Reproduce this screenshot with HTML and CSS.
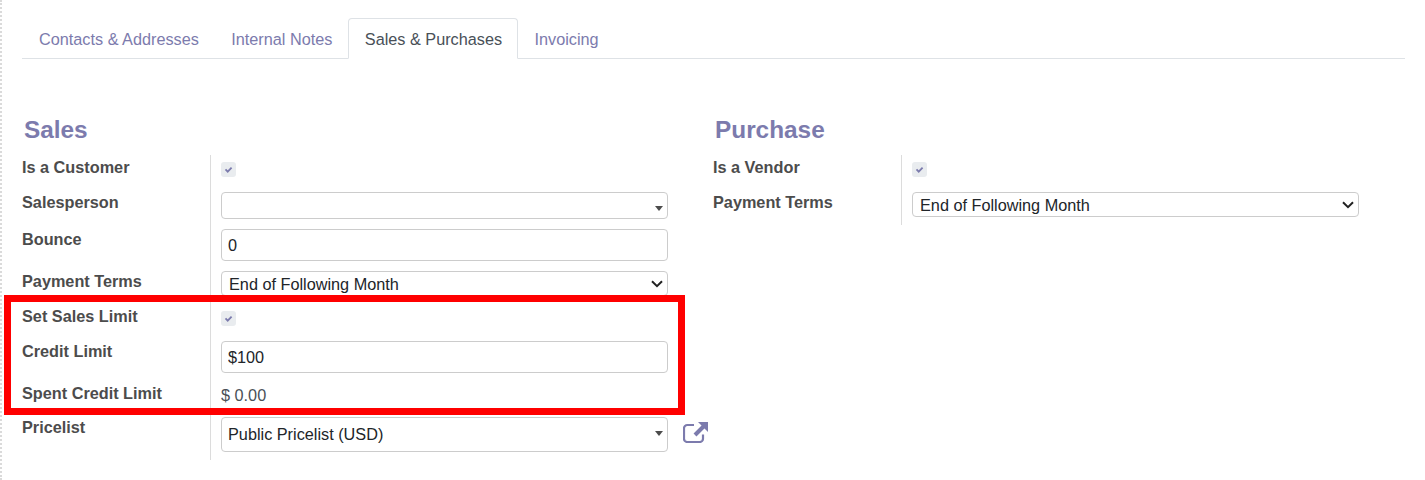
FILE: index.html
```html
<!DOCTYPE html>
<html lang="en">
<head>
<meta charset="utf-8">
<title>Sales &amp; Purchases</title>
<link rel="stylesheet" href="styles.css">
</head>
<body>
<div class="sheet">
  <ul class="tabs">
    <li class="tab">Contacts &amp; Addresses</li>
    <li class="tab">Internal Notes</li>
    <li class="tab active">Sales &amp; Purchases</li>
    <li class="tab">Invoicing</li>
  </ul>
  <div class="groups">
    <section class="group">
      <h2 class="group-title">Sales</h2>
      <div class="fields">
        <div class="row h37"><label class="label first">Is a Customer</label><div class="cell"><span class="check"><svg viewBox="0 0 15 15" width="15" height="15"><path class="tick" d="M4.5 7.4l2.200 2.200 3.900-4"/></svg></span></div></div>
        <div class="row h37"><label class="label">Salesperson</label><div class="cell"><div class="combo"><input class="input short" type="text"></div></div></div>
        <div class="row h42"><label class="label">Bounce</label><div class="cell"><input class="input" type="text" value="0"></div></div>
        <div class="row h35"><label class="label">Payment Terms</label><div class="cell"><select class="native"><option>End of Following Month</option></select></div></div>
        <div class="row h35"><label class="label">Set Sales Limit</label><div class="cell"><span class="check check-high"><svg viewBox="0 0 15 15" width="15" height="15"><path class="tick" d="M4.5 7.4l2.200 2.200 3.900-4"/></svg></span></div></div>
        <div class="row h42"><label class="label">Credit Limit</label><div class="cell"><input class="input" type="text" value="$100"></div></div>
        <div class="row h34"><label class="label">Spent Credit Limit</label><div class="cell"><span class="value">$ 0.00</span></div></div>
        <div class="row h43"><label class="label">Pricelist</label><div class="cell cell-link"><div class="combo"><select class="plain"><option>Public Pricelist (USD)</option></select></div>
          <svg class="ext" viewBox="0 0 25 21" width="25" height="21"><path d="M20 12.500v4.200a3.300 3.300 0 0 1-3.300 3.300H4.300A3.300 3.300 0 0 1 1 16.700V6.300A3.300 3.300 0 0 1 4.300 3H11" fill="none" stroke="#7c7bad" stroke-width="2.200"/><path d="M15 0h10v10z" fill="#7c7bad"/><path d="M20.500 4.500l-8.500 8.500" fill="none" stroke="#7c7bad" stroke-width="4"/></svg>
        </div></div>
      </div>
    </section>
    <section class="group">
      <h2 class="group-title">Purchase</h2>
      <div class="fields">
        <div class="row h37"><label class="label first">Is a Vendor</label><div class="cell"><span class="check"><svg viewBox="0 0 15 15" width="15" height="15"><path class="tick" d="M4.5 7.4l2.200 2.200 3.900-4"/></svg></span></div></div>
        <div class="row h33"><label class="label">Payment Terms</label><div class="cell"><select class="native"><option>End of Following Month</option></select></div></div>
      </div>
    </section>
  </div>
  <div class="highlight"></div>
</div>
</body>
</html>
```
FILE: styles.css
```css
* { box-sizing: border-box; }
html, body { margin: 0; height: 100%; background: #fff; overflow: hidden; }
body { font-family: "Liberation Sans", Arial, sans-serif; font-size: 16.25px; color: #212529; }

.sheet {
  position: relative;
  height: 480px;
  padding: 18px 20px 0 20px;
  border-left: 2px dotted #dadada;
}

.tabs {
  display: flex;
  margin: 0;
  padding: 0 0 0 0.8px;
  list-style: none;
  border-bottom: 1px solid #dee2e6;
}
.tab {
  margin-bottom: -1px;
  padding: 8px 15.2px 7px;
  line-height: 24px;
  border: 1px solid transparent;
  border-radius: 4px 4px 0 0;
  color: #7c7bad;
}
.tab.active {
  margin-left: -0.6px;
  padding-left: 15.8px;
  color: #495057;
  background: #fff;
  border-color: #dee2e6 #dee2e6 #fff;
}

.groups { display: grid; grid-template-columns: 691px 1fr; margin-top: 56px; }
.group-title {
  margin: 0 0 11px 2px;
  font-size: 24.375px;
  line-height: 29px;
  font-weight: 700;
  color: #7c7bad;
}

.row { display: grid; grid-template-columns: 189px 458px; }
.h33 { height: 33px; }
.h34 { height: 34px; }
.h35 { height: 35px; }
.h37 { height: 37px; }
.h42 { height: 42px; }
.h43 { height: 43px; }

.label {
  padding-top: 1px;
  line-height: 18px;
  font-weight: 700;
  color: #4c4c4c;
  border-right: 1px solid #dcdcdc;
}
.label.first { padding-top: 3px; }

.cell { padding-left: 10px; color: #495057; }
.cell-link { position: relative; }

.check {
  display: block;
  width: 15px;
  height: 15px;
  margin-top: 7px;
  border-radius: 3px;
  background: #e9ecef;
}
.check.check-high { margin-top: 5px; }
.check svg { display: block; }
.tick { fill: none; stroke: #7c7bad; stroke-width: 1.8; }

.input {
  display: block;
  width: 447px;
  height: 32px;
  padding: 0 6px;
  border: 1px solid #ccc;
  border-radius: 4px;
  font: 16.25px "Liberation Sans", Arial, sans-serif;
  color: #212529;
  background: #fff;
}
.input.short { height: 27px; }

.native {
  display: block;
  width: 447px;
  height: 25px;
  padding: 0 7px;
  border: 1px solid #ccc;
  border-radius: 4px;
  font: 16.25px "Liberation Sans", Arial, sans-serif;
  color: #212529;
  appearance: none;
  background: #fff url("data:image/svg+xml,%3Csvg xmlns='http://www.w3.org/2000/svg' width='12' height='8'%3E%3Cpath d='M1 1.200l5 5 5-5' fill='none' stroke='%23222' stroke-width='2'/%3E%3C/svg%3E") no-repeat right 4px center;
}

.combo { position: relative; width: 447px; }
.combo::after {
  content: "";
  position: absolute;
  right: 5px;
  top: 14px;
  border-style: solid;
  border-width: 5px 4px 0;
  border-color: #4c4c4c transparent transparent;
}

.plain {
  display: block;
  width: 447px;
  height: 35px;
  padding: 0 6px 2px;
  border: 1px solid #ccc;
  border-radius: 4px;
  font: 16.25px "Liberation Sans", Arial, sans-serif;
  color: #212529;
  background: #fff;
  appearance: none;
}

.value { display: block; padding-top: 3px; line-height: 18px; }

.ext { position: absolute; left: 472px; top: 5px; }

.highlight {
  position: absolute;
  left: 2px;
  top: 295px;
  width: 681px;
  height: 120px;
  border: 7px solid #f00;
  pointer-events: none;
}
```
